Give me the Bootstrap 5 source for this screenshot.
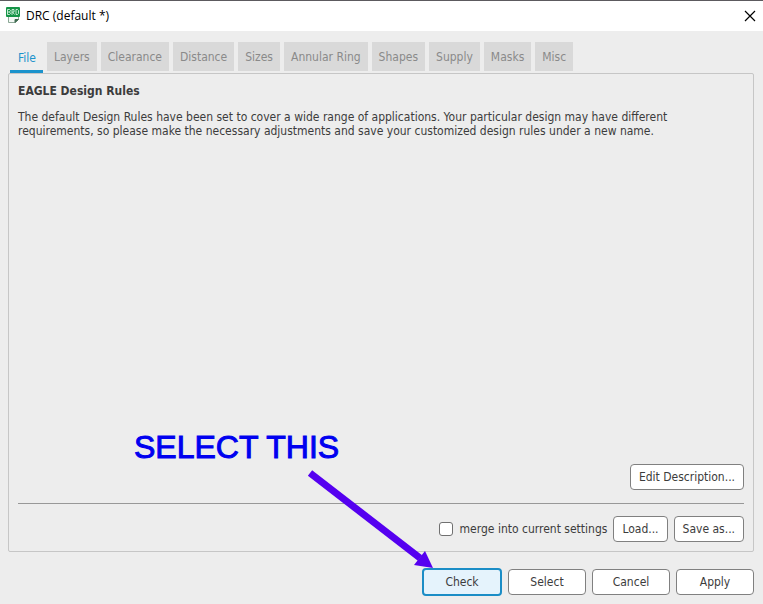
<!DOCTYPE html>
<html lang="en">
<head>
<meta charset="utf-8">
<meta name="viewport" content="width=device-width, initial-scale=1">
<title>DRC (default *)</title>
<link rel="stylesheet" href="https://cdn.jsdelivr.net/npm/bootstrap@5.3.0/dist/css/bootstrap.min.css">
<style>
  body { background: #ededed; color: #3c3c3c; font: 12px/14px "DejaVu Sans Condensed", "DejaVu Sans", sans-serif; font-stretch: condensed; }
  .titlebar { background: #fff; border-top: 1px solid #5c5a5e; height: 31px; padding: 0 7px 0 6px; gap: 6px; color: #000; font: 12px/16px "Open Sans", sans-serif; }
  .titlebar h1 { font: inherit; }
  .close-btn { line-height: 0; color: #000; }
  .rule-tabs { --bs-nav-link-padding-x: 7px; --bs-nav-link-padding-y: 0; gap: 4px; padding: 11px 10px 0; }
  .rule-tabs .nav-link { height: 29px; line-height: 30px; background: #d9d9d9; color: #8a8a8a; font-size: 12px; border: 0; border-radius: 0; }
  .rule-tabs .nav-link.active { height: 31px; line-height: 30px; background: transparent; color: #1b93cc; box-shadow: inset 0 -3px #1b93cc; padding: 0 7px 0 8px; }
  .rules-panel { border: 1px solid #c6c6c6; border-radius: 2px; margin: 0 9px 0 8px; padding: 9px; }
  .rules-panel h2 { font-size: 12px; line-height: 16px; font-weight: 700; margin: 0 0 11px; }
  .file-row { border-top: 1px solid #989898; margin-top: 13px; padding-top: 12px; gap: 6px; }
  .dlg-btn { --bs-btn-padding-x: 8px; --bs-btn-padding-y: 0; --bs-btn-font-size: 12px; --bs-btn-line-height: 24px; --bs-btn-bg: #fff; --bs-btn-color: #3c3c3c; --bs-btn-border-color: #808080; --bs-btn-border-radius: 4px; --bs-btn-hover-bg: #e5f3fc; --bs-btn-hover-border-color: #1b8dc6; white-space: nowrap; }
  .dlg-actions { gap: 6px; padding: 16px 9px 8px; }
  .dlg-actions .dlg-btn { width: 78px; }
  .dlg-actions .default-btn { --bs-btn-bg: #e5f3fc; --bs-btn-border-color: #1b8dc6; --bs-btn-border-width: 2px; width: 80px; height: 28px; }
  .merge-check { width: 14px; height: 14px; margin: 0 7px 0 0; border: 1px solid #707070; }
  .merge-check[type=checkbox] { border-radius: 3px; }
  .note { left: 134px; bottom: 139px; color: #0000f0; font: 32px/36px "Liberation Sans", Arial, sans-serif; -webkit-text-stroke: 1px #0000f0; }
  .note-arrow { left: 306px; bottom: 33px; pointer-events: none; }
</style>
</head>
<body>
<div class="min-vh-100 d-flex flex-column position-relative">
  <header class="titlebar d-flex align-items-center">
    <svg width="14" height="18" viewBox="0 0 14 18" aria-hidden="true">
      <path d="M2.500 2V15.500H9L12.500 12V2" fill="#f4f8f5" stroke="#8aa795"/>
      <path d="M9 15.500V12.500H12.500Z" fill="#3f6b50" stroke="#3f6b50"/>
      <rect width="14" height="10" rx="1" fill="#159447"/>
      <path d="M1.500 2.500V7.500H3.500L4.500 6.500L3.500 5L4.500 3.500L3.500 2.500ZM1.500 5H3.500M6 8V2.500H8V5H6.500L8.500 7.500M10 2.500V7.500H11.500L12.500 6.500V3.500L11.500 2.500Z" fill="none" stroke="#d9f3e2" stroke-width=".9"/>
    </svg>
    <h1 class="mb-0">DRC (default *)</h1>
    <button type="button" class="close-btn btn p-0 border-0 ms-auto" aria-label="Close">
      <svg width="12" height="12" viewBox="0 0 12 12"><path d="M1 1L11 11M11 1L1 11" stroke="currentColor" stroke-width="1.200"/></svg>
    </button>
  </header>

  <ul class="nav rule-tabs" role="tablist">
    <li role="presentation"><button type="button" class="nav-link active" role="tab" aria-selected="true" aria-controls="file-panel" id="file-tab">File</button></li>
    <li role="presentation"><button type="button" class="nav-link" role="tab">Layers</button></li>
    <li role="presentation"><button type="button" class="nav-link" role="tab">Clearance</button></li>
    <li role="presentation"><button type="button" class="nav-link" role="tab">Distance</button></li>
    <li role="presentation"><button type="button" class="nav-link" role="tab">Sizes</button></li>
    <li role="presentation"><button type="button" class="nav-link" role="tab">Annular Ring</button></li>
    <li role="presentation"><button type="button" class="nav-link" role="tab">Shapes</button></li>
    <li role="presentation"><button type="button" class="nav-link" role="tab">Supply</button></li>
    <li role="presentation"><button type="button" class="nav-link" role="tab">Masks</button></li>
    <li role="presentation"><button type="button" class="nav-link" role="tab">Misc</button></li>
  </ul>

  <main class="rules-panel flex-grow-1 d-flex flex-column" id="file-panel" role="tabpanel" aria-labelledby="file-tab">
    <h2>EAGLE Design Rules</h2>
    <p class="mb-0">The default Design Rules have been set to cover a wide range of applications. Your particular design may have different<br>requirements, so please make the necessary adjustments and save your customized design rules under a new name.</p>
    <div class="mt-auto text-end"><button type="button" class="btn dlg-btn">Edit Description...</button></div>
    <div class="file-row d-flex justify-content-end align-items-center">
      <div class="d-flex align-items-center">
        <input class="form-check-input merge-check" type="checkbox" id="merge">
        <label for="merge">merge into current settings</label>
      </div>
      <button type="button" class="btn dlg-btn">Load...</button>
      <button type="button" class="btn dlg-btn">Save as...</button>
    </div>
  </main>

  <footer class="dlg-actions d-flex justify-content-end align-items-center">
    <button type="button" class="btn dlg-btn default-btn">Check</button>
    <button type="button" class="btn dlg-btn">Select</button>
    <button type="button" class="btn dlg-btn">Cancel</button>
    <button type="button" class="btn dlg-btn">Apply</button>
  </footer>

  <div class="note position-absolute">SELECT THIS</div>
  <svg class="note-arrow position-absolute" width="130" height="104" viewBox="0 0 130 104" aria-hidden="true">
    <path d="M4 6L114 91" stroke="#5500f0" stroke-width="7"/>
    <path d="M119 84L127 101L108 98Z" fill="#5500f0"/>
  </svg>
</div>
<script src="https://cdn.jsdelivr.net/npm/bootstrap@5.3.0/dist/js/bootstrap.bundle.min.js"></script>
</body>
</html>
